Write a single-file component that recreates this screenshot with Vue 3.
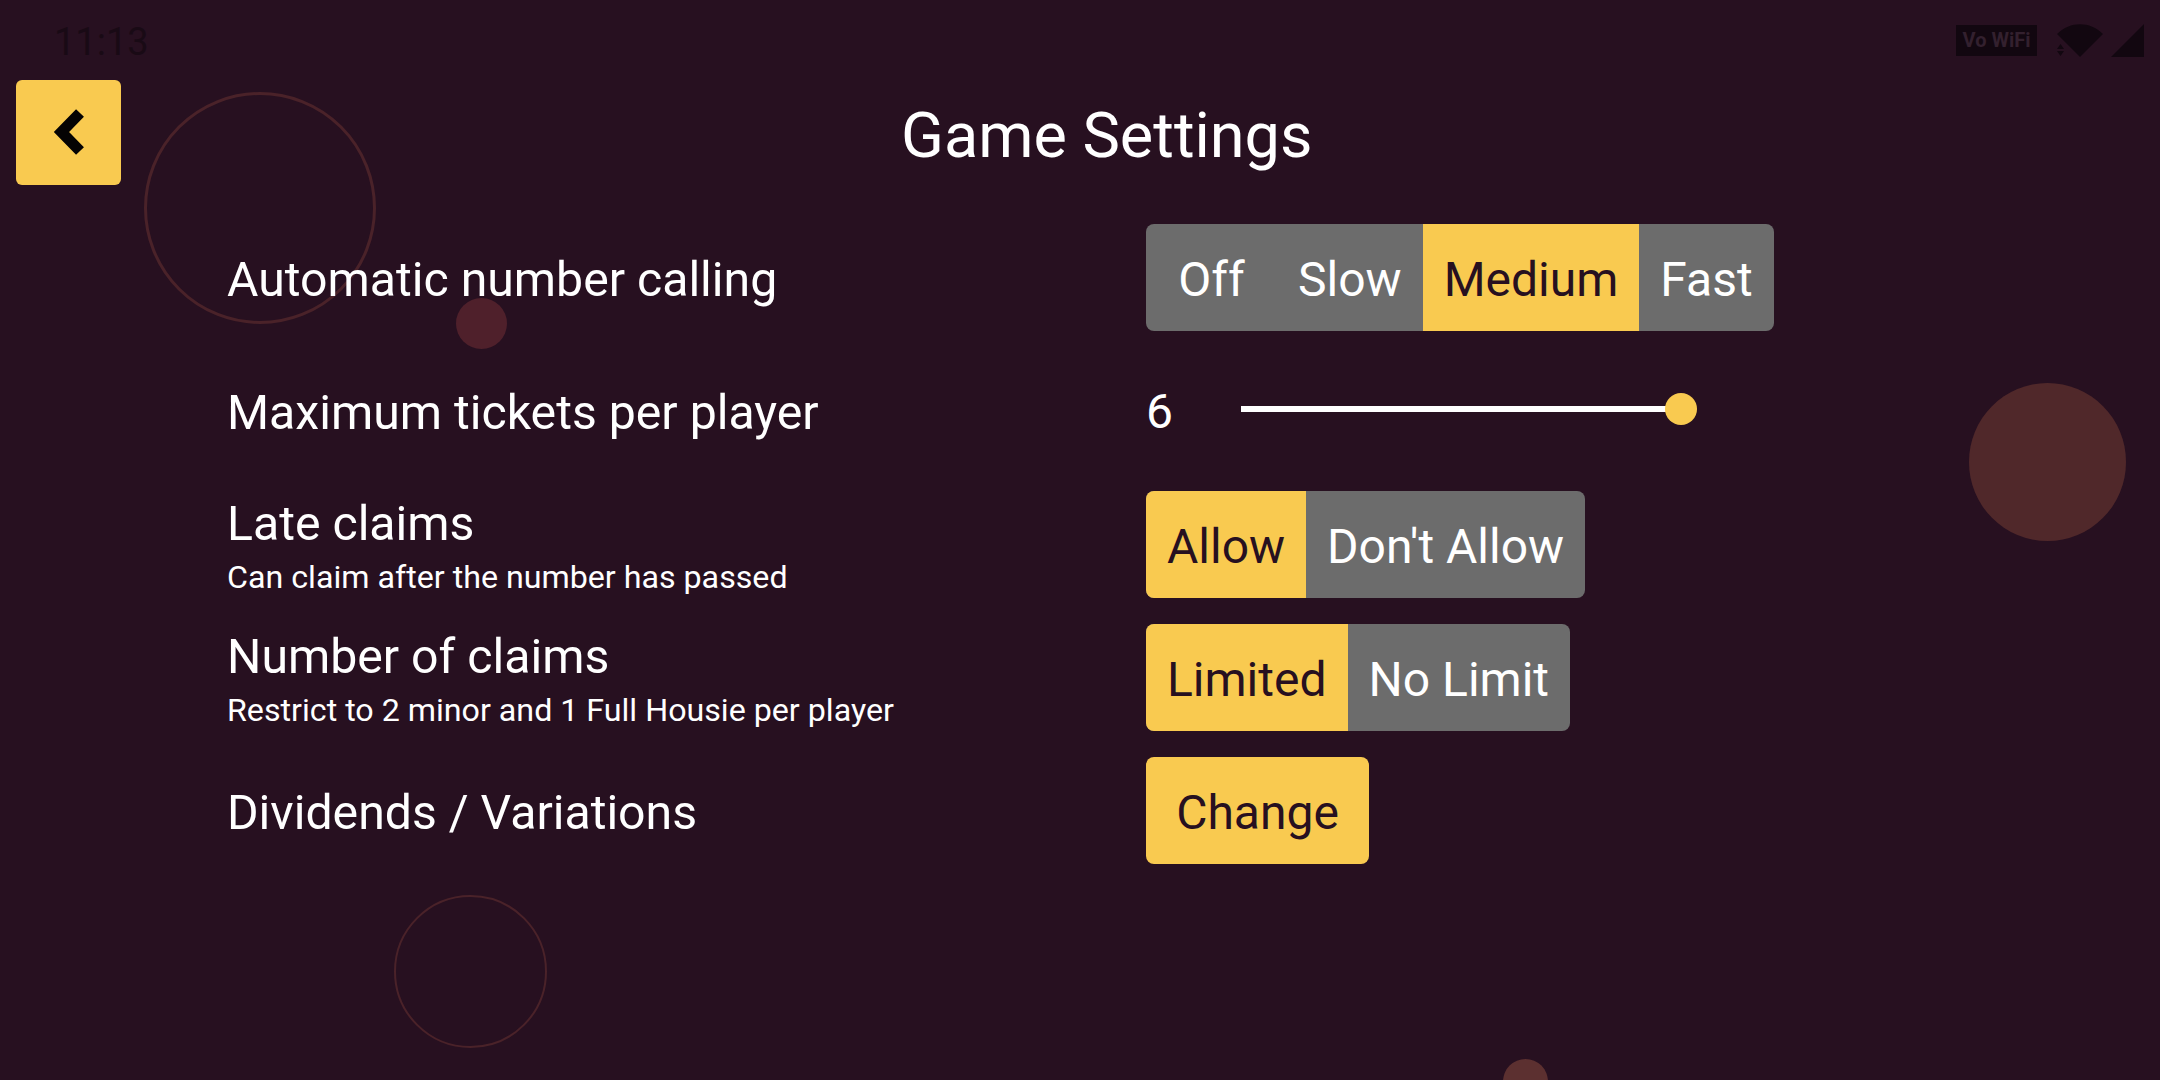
<script setup>
import { ref } from "vue";

const speed = ref("Medium");
const late = ref("Allow");
const claims = ref("Limited");

const speeds = ["Off", "Slow", "Medium", "Fast"];
const lateOptions = ["Allow", "Don't Allow"];
const claimOptions = ["Limited", "No Limit"];
</script>

<template>
  <div class="page">
    <!-- background decoration -->
    <span class="deco ring ring-a"></span>
    <span class="deco ring ring-b"></span>
    <span class="deco dot dot-a"></span>
    <span class="deco dot dot-b"></span>
    <span class="deco dot dot-c"></span>

    <div class="status-bar">
      <span class="time">11:13</span>
      <div class="status-icons">
        <span class="vowifi">Vo WiFi</span>
        <svg width="46" height="33" viewBox="0 0 46 33">
          <path d="M0 10 C13 -3 33 -3 46 10 L23 33 L9 19 Z" fill="#120710" />
          <path d="M0 25 L3.5 20 L7 25 Z M0 27 L7 27 L3.5 32 Z" fill="#120710" />
        </svg>
        <svg width="33" height="33" viewBox="0 0 33 33">
          <path d="M33 0 V33 H0 Z" fill="#120710" />
        </svg>
      </div>
    </div>

    <div class="header">
      <button class="back">
        <svg width="36" height="52" viewBox="0 0 36 52">
          <path d="M29 6 L10.5 25 L29 44" fill="none" stroke="#050303" stroke-width="11" />
        </svg>
      </button>
      <h1 class="title">Game Settings</h1>
    </div>

    <div class="settings">
      <div class="label">
        <div class="name">Automatic number calling</div>
      </div>
      <div class="control">
        <div class="segments">
          <button
            v-for="s in speeds"
            :key="s"
            class="seg"
            :class="{ active: speed === s, wide: s === 'Off' }"
            @click="speed = s"
          >{{ s }}</button>
        </div>
      </div>

      <div class="label">
        <div class="name">Maximum tickets per player</div>
      </div>
      <div class="control">
        <span class="value">6</span>
        <div class="slider">
          <span class="thumb"></span>
        </div>
      </div>

      <div class="label">
        <div class="name">Late claims</div>
        <div class="hint">Can claim after the number has passed</div>
      </div>
      <div class="control">
        <div class="segments">
          <button
            v-for="o in lateOptions"
            :key="o"
            class="seg"
            :class="{ active: late === o }"
            @click="late = o"
          >{{ o }}</button>
        </div>
      </div>

      <div class="label">
        <div class="name">Number of claims</div>
        <div class="hint">Restrict to 2 minor and 1 Full Housie per player</div>
      </div>
      <div class="control">
        <div class="segments">
          <button
            v-for="o in claimOptions"
            :key="o"
            class="seg"
            :class="{ active: claims === o }"
            @click="claims = o"
          >{{ o }}</button>
        </div>
      </div>

      <div class="label">
        <div class="name">Dividends / Variations</div>
      </div>
      <div class="control">
        <button class="change">Change</button>
      </div>
    </div>
  </div>
</template>

<style>
html,
body {
  margin: 0;
  background: #271020;
}
</style>

<style scoped>
.page {
  position: relative;
  width: 2160px;
  height: 1080px;
  overflow: hidden;
  background: #271020;
  color: #fff;
  font-family: Roboto, "Liberation Sans", sans-serif;
}

.deco {
  position: absolute;
  border-radius: 50%;
  box-sizing: border-box;
}
.ring-a {
  left: 144px;
  top: 92px;
  width: 232px;
  height: 232px;
  border: 3px solid #4a2229;
}
.ring-b {
  left: 394px;
  top: 895px;
  width: 153px;
  height: 153px;
  border: 2px solid #4a2229;
}
.dot-a {
  left: 456px;
  top: 298px;
  width: 51px;
  height: 51px;
  background: #4f202b;
}
.dot-b {
  left: 1969px;
  top: 383px;
  width: 157px;
  height: 158px;
  background: #50282a;
}
.dot-c {
  left: 1503px;
  top: 1059px;
  width: 45px;
  height: 45px;
  background: #5c3030;
}

.status-bar {
  position: relative;
  height: 80px;
  display: flex;
  justify-content: space-between;
  padding: 0 16px 0 54px;
  align-items: flex-start;
}
.time {
  margin-top: 20px;
  font-size: 38px;
  line-height: 44px;
  color: #190a15;
}
.status-icons {
  display: flex;
  align-items: center;
  gap: 8px;
  margin-top: 24px;
}
.vowifi {
  width: 81px;
  height: 31px;
  margin-right: 12px;
  background: #120710;
  color: #33202e;
  font-size: 20px;
  font-weight: 700;
  line-height: 31px;
  text-align: center;
  white-space: nowrap;
}

.header {
  position: relative;
  display: flex;
  align-items: center;
  padding-left: 16px;
}
.back {
  width: 105px;
  height: 105px;
  padding: 0;
  border: none;
  border-radius: 6px;
  background: #f9ca50;
  display: flex;
  align-items: center;
  justify-content: center;
  cursor: pointer;
}
.title {
  margin: 7px 0 0 780px;
  font-size: 63px;
  font-weight: 400;
  line-height: 70px;
}

.settings {
  position: relative;
  margin-top: 39px;
  padding-left: 227px;
  display: grid;
  grid-template-columns: 919px 1fr;
  grid-auto-rows: 107px;
  row-gap: 26.25px;
}
.label {
  display: flex;
  flex-direction: column;
  justify-content: center;
}
.name {
  padding-top: 4px;
  font-size: 48.2px;
  line-height: 56px;
}
.hint {
  margin-top: 6px;
  font-size: 32.2px;
  line-height: 38px;
}
.control {
  display: flex;
  align-items: center;
}

.segments {
  display: flex;
  height: 107px;
  border-radius: 8px;
  overflow: hidden;
  background: #6c6c6c;
}
.seg {
  padding: 4px 21px 0;
  border: none;
  background: transparent;
  color: #fff;
  font: inherit;
  font-size: 48px;
  cursor: pointer;
}
.seg.wide {
  min-width: 131px;
}
.seg.active {
  background: #f9ca50;
  color: #271020;
}

.value {
  width: 95px;
  padding-top: 2px;
  font-size: 48px;
  line-height: 56px;
}
.slider {
  position: relative;
  width: 440px;
  height: 6px;
  margin-bottom: 4px;
  background: #fff;
}
.thumb {
  position: absolute;
  right: -16px;
  top: -13px;
  width: 32px;
  height: 32px;
  border-radius: 50%;
  background: #f9ca50;
}

.change {
  width: 223px;
  height: 107px;
  padding: 4px 0 0;
  border: none;
  border-radius: 8px;
  background: #f9ca50;
  color: #271020;
  font: inherit;
  font-size: 48px;
  cursor: pointer;
}
</style>
